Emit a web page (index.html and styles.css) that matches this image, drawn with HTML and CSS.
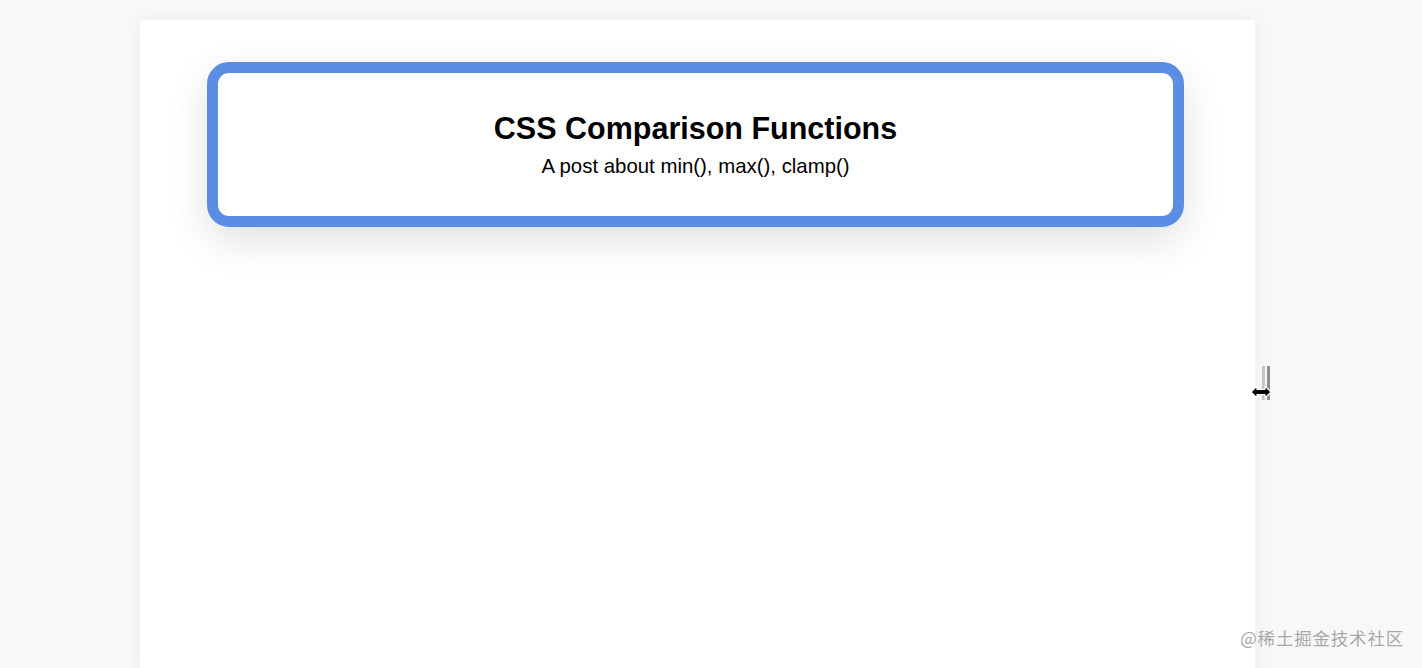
FILE: index.html
```html
<!DOCTYPE html>
<html lang="en">
<head>
<meta charset="utf-8">
<title>CSS Comparison Functions</title>
<link rel="stylesheet" href="styles.css">
</head>
<body>
<div class="stage">
  <main class="panel">
    <section class="card">
      <h1 class="card-title">CSS Comparison Functions</h1>
      <p class="card-sub">A post about min(), max(), clamp()</p>
    </section>
  </main>
  <div class="resizer">
    <span class="grip grip-light"></span>
    <span class="grip"></span>
    <svg class="cursor" width="22" height="14" viewBox="0 0 22 14" aria-hidden="true">
      <path d="M1 7 L7 1 L7 4.5 L15 4.5 L15 1 L21 7 L15 13 L15 9.5 L7 9.5 L7 13 Z" fill="#000" stroke="#fff" stroke-width="1.2" stroke-linejoin="round"/>
    </svg>
  </div>
</div>
<div class="watermark">@稀土掘金技术社区</div>
</body>
</html>
```
FILE: styles.css
```css
html, body {
  margin: 0;
  padding: 0;
  height: 100%;
  overflow: hidden;
}
body {
  background: #f8f8f8;
  font-family: "Liberation Sans", Arial, sans-serif;
  color: #000;
}
.stage {
  display: flex;
  align-items: flex-start;
  padding: 20px 0 0 140px;
  height: 100%;
  box-sizing: border-box;
}
.panel {
  width: 1115px;
  height: 660px;
  background: #fff;
  box-shadow: 0 0 18px rgba(0, 0, 0, 0.06);
  padding: 42px 71px 0 67px;
  box-sizing: border-box;
}
.card {
  border: 11px solid #5b8de4;
  border-radius: 22px;
  background: #fff;
  padding: 37px 20px 38px;
  text-align: center;
  box-shadow: 0 14px 40px rgba(0, 0, 0, 0.12);
}
.card-title {
  margin: 0 0 8px;
  font-size: 30.5px;
  line-height: 36px;
  font-weight: 700;
}
.card-sub {
  margin: 0;
  font-size: 20.4px;
  line-height: 24px;
}
.resizer {
  position: relative;
  display: flex;
  gap: 2px;
  margin: 346px 0 0 7px;
}
.grip {
  display: block;
  width: 3px;
  height: 34px;
  background: #8f8f8f;
}
.grip-light {
  background: #c4c4c4;
}
.cursor {
  position: absolute;
  left: -12px;
  top: 19px;
}
.watermark {
  position: absolute;
  right: 18px;
  bottom: 18px;
  font-family: "Noto Sans CJK SC", sans-serif;
  font-size: 17.5px;
  color: #a8a8a8;
  letter-spacing: 0.8px;
}
```
